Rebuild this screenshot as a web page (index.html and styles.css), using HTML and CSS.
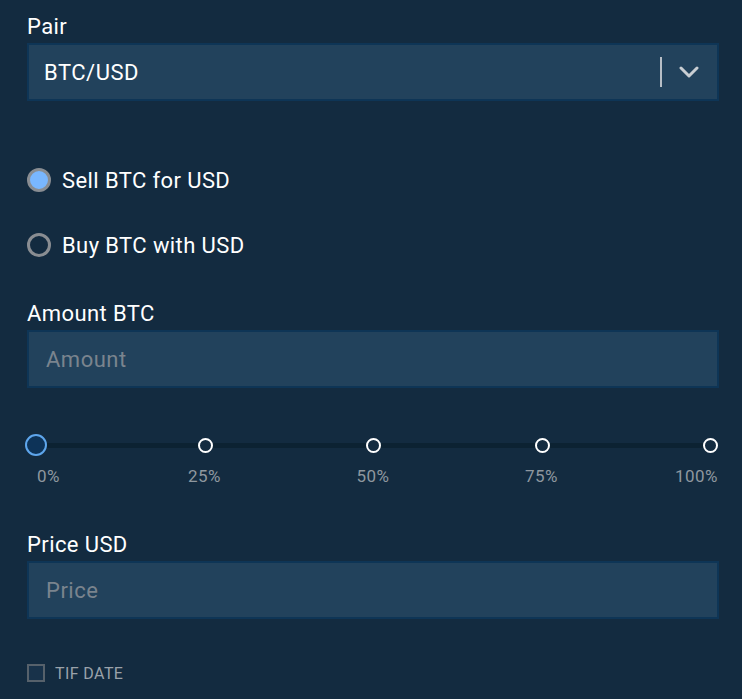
FILE: index.html
```html
<!DOCTYPE html>
<html>
<head>
<meta charset="utf-8">
<link rel="stylesheet" href="styles.css">
</head>
<body>
<div class="form">
  <div class="field">
    <div class="field-label">Pair</div>
    <div class="select">
      <span class="select-value">BTC/USD</span>
      <span class="select-sep"></span>
      <svg class="chevron" width="20" height="14" viewBox="0 0 20 14"><path d="M2 3 L10 11 L18 3" fill="none" stroke="#c9ced3" stroke-width="3" stroke-linecap="round" stroke-linejoin="round"/></svg>
    </div>
  </div>

  <div class="radios">
    <label class="radio"><span class="radio-dot checked"></span><span>Sell BTC for USD</span></label>
    <label class="radio"><span class="radio-dot"></span><span>Buy BTC with USD</span></label>
  </div>

  <div class="field field-amount">
    <div class="field-label">Amount BTC</div>
    <div class="input"><span class="placeholder">Amount</span></div>
  </div>

  <div class="slider">
    <div class="track">
      <span class="mark mark-active" style="left:0%"></span>
      <span class="mark" style="left:25%"></span>
      <span class="mark" style="left:50%"></span>
      <span class="mark" style="left:75%"></span>
      <span class="mark" style="left:100%"></span>
    </div>
    <div class="ticks">
      <span class="tick tick-first" style="left:0%">0%</span>
      <span class="tick" style="left:25%">25%</span>
      <span class="tick" style="left:50%">50%</span>
      <span class="tick" style="left:75%">75%</span>
      <span class="tick tick-last" style="left:100%">100%</span>
    </div>
  </div>

  <div class="field field-price">
    <div class="field-label">Price USD</div>
    <div class="input"><span class="placeholder">Price</span></div>
  </div>

  <label class="check"><span class="check-box"></span><span>TIF DATE</span></label>
</div>
</body>
</html>
```

FILE: styles.css
```css
html, body {
  margin: 0;
  padding: 0;
  background: #132b40;
  height: 100%;
}
body {
  font-family: Roboto, "Liberation Sans", Arial, sans-serif;
  color: #ffffff;
}
.form {
  padding: 13px 23px 0 27px;
  display: flex;
  flex-direction: column;
}
.field-label {
  font-size: 22px;
  letter-spacing: 0.4px;
  line-height: 28px;
  height: 28px;
  color: #ffffff;
  margin-bottom: 2px;
}
.select, .input {
  height: 58px;
  box-sizing: border-box;
  background: #22425c;
  border: 2px solid #0e3556;
  display: flex;
  align-items: center;
}
.select {
  padding: 0 18px 0 15px;
}
.select-value {
  flex: 1;
  font-size: 22px;
  letter-spacing: 0.5px;
}
.select-sep {
  width: 2px;
  height: 30px;
  background: #b7bec6;
  margin-right: 17px;
}
.chevron {
  display: block;
}
.radios {
  margin-top: 67px;
  display: flex;
  flex-direction: column;
  gap: 41px;
}
.radio {
  display: flex;
  align-items: center;
  height: 24px;
  font-size: 22px;
  letter-spacing: 0.4px;
  gap: 11px;
}
.radio-dot {
  width: 24px;
  height: 24px;
  box-sizing: border-box;
  border-radius: 50%;
  border: 3px solid #898d92;
  background: #132b40;
}
.radio-dot.checked {
  background: #79b7ff;
}
.field-amount {
  margin-top: 43px;
}
.input {
  padding: 0 17px;
}
.placeholder {
  font-size: 22px;
  letter-spacing: 0.5px;
  color: #7a848e;
}
.slider {
  margin-top: 46px;
  padding: 0 9px;
}
.track {
  position: relative;
  height: 22px;
}
.track::before {
  content: "";
  position: absolute;
  left: 0;
  right: 0;
  top: 9px;
  height: 5px;
  background: #0c2232;
}
.mark {
  position: absolute;
  top: 4px;
  width: 15px;
  height: 15px;
  box-sizing: border-box;
  margin-left: -7px;
  border-radius: 50%;
  border: 2px solid #ffffff;
  background: #132b40;
}
.mark-active {
  top: 0;
  width: 22px;
  height: 22px;
  margin-left: -11px;
  border: 2px solid #5ea6ec;
  background: #0d3358;
}
.ticks {
  position: relative;
  height: 20px;
  margin-top: 10px;
  font-size: 17px;
  letter-spacing: 0.5px;
  line-height: 20px;
  color: #8e979f;
}
.tick {
  position: absolute;
  top: 0;
  transform: translateX(-50%);
  white-space: nowrap;
}
.tick-first {
  transform: translateX(1px);
}
.tick-last {
  transform: translateX(calc(-100% + 8px));
}
.field-price {
  margin-top: 45px;
}
.check {
  margin-top: 45px;
  display: flex;
  align-items: center;
  height: 18px;
  gap: 10px;
  font-size: 16px;
  letter-spacing: 0.4px;
  color: #9aa2aa;
}
.check-box {
  width: 18px;
  height: 18px;
  box-sizing: border-box;
  border: 2px solid #56616b;
  background: #18324a;
}
```
